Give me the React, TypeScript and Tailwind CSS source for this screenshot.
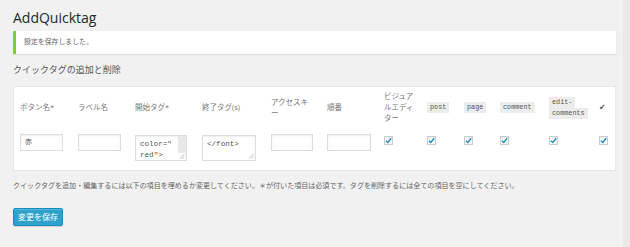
import React from "react";

const jp = { fontFamily: '"Open Sans","Noto Sans CJK JP",sans-serif' };
const mono = { fontFamily: '"Liberation Mono","Noto Sans CJK JP",monospace' };

function Check() {
  return (
    <span className="inline-flex h-[9px] w-[9px] items-center justify-center border border-[#c9cdd1] bg-white shadow-[inset_0_1px_2px_rgba(0,0,0,0.1)]">
      <svg width="7" height="7" viewBox="0 0 7 7">
        <path d="M0.9 3.7 L2.8 5.5 L6.2 1.3" stroke="#1e8cbe" strokeWidth="1.4" fill="none" />
      </svg>
    </span>
  );
}

function Grip() {
  return (
    <svg className="absolute bottom-[1px] right-[1px]" width="6" height="6" viewBox="0 0 6 6">
      <path d="M5.5 1 L1 5.5 M5.5 3.5 L3.5 5.5" stroke="#aaa" strokeWidth="0.8" />
    </svg>
  );
}

function Code({ children }: { children: React.ReactNode }) {
  return (
    <span className="block w-fit bg-[#ececec] px-[3px] text-[6.8px] leading-[11px] text-[#555]" style={mono}>
      {children}
    </span>
  );
}

export default function App() {
  return (
    <div className="flex h-[247px] w-[630px] bg-[#f1f1f1] text-[#666]" style={jp}>
      <div className="flex-1 pl-[13px] pr-[7px]">
        <h2 className="pt-[8px] text-[14px] leading-[20px] text-[#23282d]" style={{ fontFamily: '"Open Sans",sans-serif' }}>
          AddQuicktag
        </h2>
        <div className="mt-[3px] flex h-[23px] items-center border-l-[3px] border-[#7ad03a] bg-white pl-[8px] text-[6.9px] text-[#666] shadow-[0_1px_1px_rgba(0,0,0,0.08)]">
          設定を保存しました。
        </div>
        <h3 className="mt-[9px] text-[9px] leading-[13px] text-[#555]">クイックタグの追加と削除</h3>
        <div className="mt-[10px] h-[85px] border border-[#e8e8e8] bg-white pl-[6px] pt-[4px]">
          <div className="grid h-[33px] grid-cols-[58px_57px_67px_69px_56px_57px_43px_37px_36px_49px_50px_1fr] items-center text-[7.5px] leading-[11px] text-[#777]">
            <div>ボタン名*</div>
            <div>ラベル名</div>
            <div>開始タグ*</div>
            <div>終了タグ(s)</div>
            <div>
              アクセスキ
              <br />ー
            </div>
            <div>順番</div>
            <div>
              ビジュア
              <br />
              ルエディ
              <br />
              ター
            </div>
            <div><Code>post</Code></div>
            <div><Code>page</Code></div>
            <div><Code>comment</Code></div>
            <div>
              <Code>edit-</Code>
              <Code>comments</Code>
            </div>
            <div className="text-[8px] text-[#555]" style={{ fontFamily: '"DejaVu Sans",sans-serif' }}>✔</div>
          </div>
          <div className="mt-[10px] grid grid-cols-[58px_57px_67px_69px_56px_57px_43px_37px_36px_49px_50px_1fr] items-start text-[7px] text-[#555]">
            <div className="flex h-[17px] w-[43px] items-center border border-[#ddd] pl-[4px] shadow-[inset_0_1px_2px_rgba(0,0,0,0.07)]">赤</div>
            <div className="h-[17px] w-[43px] border border-[#ddd] shadow-[inset_0_1px_2px_rgba(0,0,0,0.07)]" />
            <div className="relative mt-[1px] flex h-[26px] w-[52px] border border-[#ddd] shadow-[inset_0_1px_2px_rgba(0,0,0,0.07)]">
              <div className="flex-1 pl-[4px] pt-[3px] text-[7.6px] leading-[11px] text-[#555]" style={mono}>
                color="
                <br />
                red"&gt;
              </div>
              <div className="mb-[7px] w-[8px] bg-[#e8e8e8]" />
              <Grip />
            </div>
            <div className="relative mt-[1px] h-[26px] w-[54px] border border-[#ddd] pl-[4px] pt-[3px] text-[7.6px] leading-[11px] text-[#555] shadow-[inset_0_1px_2px_rgba(0,0,0,0.07)]" style={mono}>
              &lt;/font&gt;
              <Grip />
            </div>
            <div className="h-[17px] w-[42px] border border-[#ddd] shadow-[inset_0_1px_2px_rgba(0,0,0,0.07)]" />
            <div className="h-[17px] w-[44px] border border-[#ddd] shadow-[inset_0_1px_2px_rgba(0,0,0,0.07)]" />
            <div className="mt-[2px]"><Check /></div>
            <div className="mt-[2px]"><Check /></div>
            <div className="mt-[2px]"><Check /></div>
            <div className="mt-[2px]"><Check /></div>
            <div className="mt-[2px]"><Check /></div>
            <div className="mt-[2px]"><Check /></div>
          </div>
        </div>
        <p className="mt-[9px] text-[7.05px] leading-[10px] text-[#666]">
          クイックタグを追加・編集するには以下の項目を埋めるか変更してください。＊が付いた項目は必須です。タグを削除するには全ての項目を空にしてください。
        </p>
        <button className="mt-[18px] flex h-[18px] w-[50px] items-center justify-center rounded-[2px] border border-[#1a8bbf] bg-[#2ea2cc] text-[8px] text-white shadow-[inset_0_1px_0_rgba(120,200,230,0.5),0_1px_0_rgba(0,0,0,0.12)]">
          変更を保存
        </button>
      </div>
      <div className="w-[7px] bg-[#e9e9e9]" />
    </div>
  );
}
